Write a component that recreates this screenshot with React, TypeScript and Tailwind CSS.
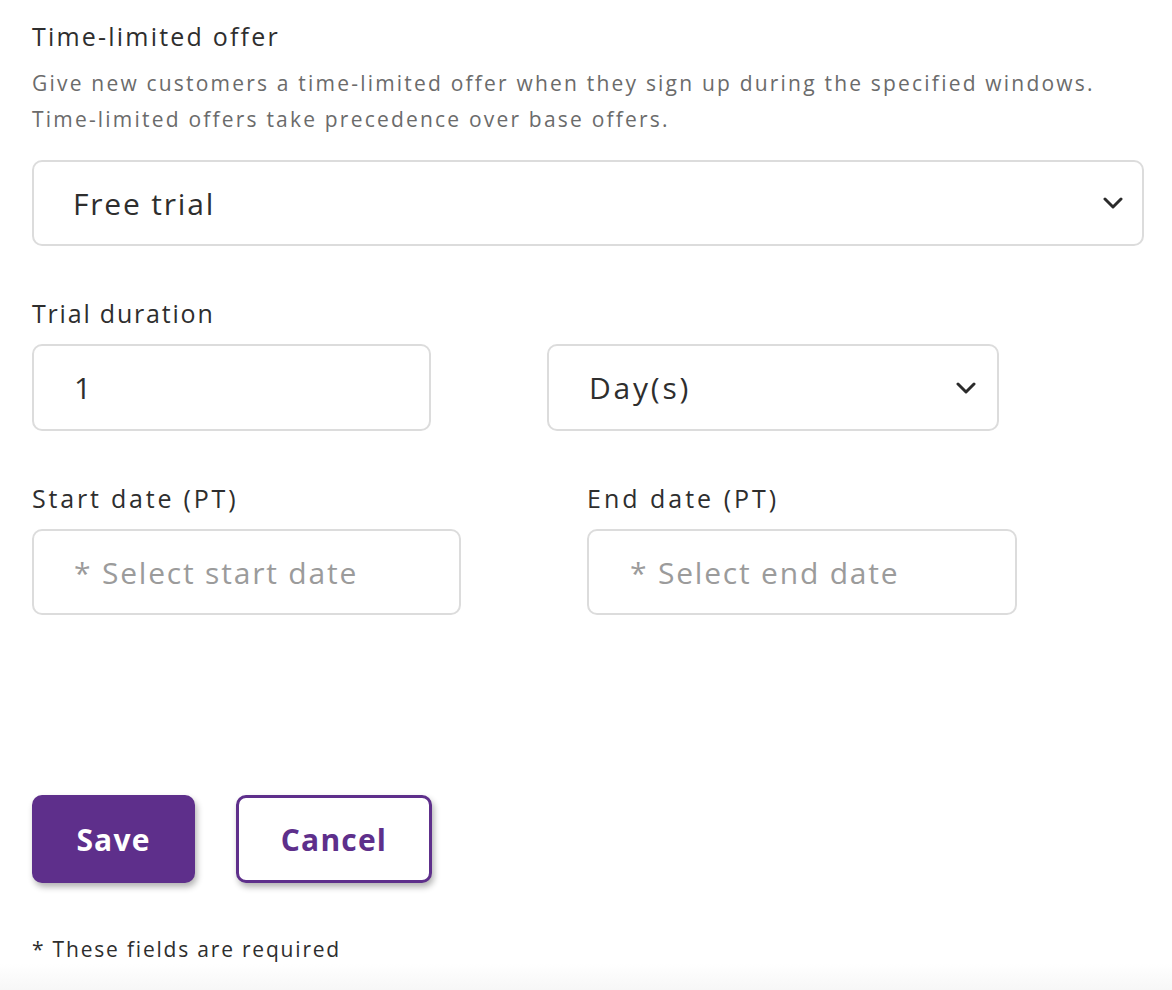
import React from "react";

const Chevron = ({ className }: { className?: string }) => (
  <svg className={className} width="20" height="12" viewBox="0 0 20 12" fill="none">
    <path d="M2 2 L10 10 L18 2" stroke="#2b2b2b" strokeWidth="3" strokeLinecap="round" strokeLinejoin="round" />
  </svg>
);

export default function App() {
  return (
    <div
      className="w-full h-[990px] bg-white flex flex-col text-[#2e2e2e]"
      style={{ fontFamily: "'Open Sans', Lato, sans-serif" }}
    >
      <div className="px-8 flex-1">
        <div className="pt-[20px] text-[25px] leading-[32px] tracking-[2.2px]">Time-limited offer</div>
        <div className="mt-[25px] text-[21px] leading-[36px] text-[#6b6b6b] tracking-[2.2px]">
          <div className="-mt-[12px]">Give new customers a time-limited offer when they sign up during the specified windows.</div>
          <div>Time-limited offers take precedence over base offers.</div>
        </div>
        <div className="mt-[23px] w-[1112px] h-[86px] border-2 border-[#dcdcdc] rounded-[10px] flex items-center justify-between pl-[39px] pr-[19px]">
          <span className="text-[30px] tracking-[1.8px]">Free trial</span>
          <Chevron />
        </div>

        <div className="mt-[51px] text-[25px] leading-[32px] tracking-[1.8px]">Trial duration</div>
        <div className="mt-[15px] flex">
          <div className="w-[399px] h-[87px] border-2 border-[#dcdcdc] rounded-[10px] flex items-center pl-[40px] text-[30px]">1</div>
          <div className="ml-[116px] w-[452px] h-[87px] border-2 border-[#dcdcdc] rounded-[10px] flex items-center justify-between pl-[40px] pr-[21px]">
            <span className="text-[30px] tracking-[2.8px]">Day(s)</span>
            <Chevron />
          </div>
        </div>

        <div className="mt-[51px] flex">
          <div className="w-[429px]">
            <div className="text-[25px] leading-[32px] tracking-[2.8px]">Start date (PT)</div>
            <div className="mt-[15px] h-[86px] border-2 border-[#dcdcdc] rounded-[10px] flex items-center pl-[40px] text-[30px] text-[#9b9b9b] tracking-[1.8px]">* Select start date</div>
          </div>
          <div className="ml-[126px] w-[430px]">
            <div className="text-[25px] leading-[32px] tracking-[3px]">End date (PT)</div>
            <div className="mt-[15px] h-[86px] border-2 border-[#dcdcdc] rounded-[10px] flex items-center pl-[41px] text-[30px] text-[#9b9b9b] tracking-[1.8px]">* Select end date</div>
          </div>
        </div>

        <div className="mt-[180px] flex gap-[41px]">
          <button className="w-[163px] h-[88px] rounded-[10px] bg-[#5e2f8b] text-white text-[30px] font-bold tracking-[1.2px] shadow-[2px_4px_6px_rgba(0,0,0,0.3)]">Save</button>
          <button className="w-[196px] h-[88px] rounded-[10px] border-[3px] border-[#5e2f8b] bg-white text-[#5e2f8b] text-[30px] font-bold tracking-[1.2px] shadow-[2px_4px_6px_rgba(0,0,0,0.3)]">Cancel</button>
        </div>

        <div className="mt-[51px] text-[21px] leading-[30px] tracking-[1.8px]">* These fields are required</div>
      </div>
      <div className="h-[26px] bg-gradient-to-b from-white to-[#f7f7f7]" />
    </div>
  );
}
